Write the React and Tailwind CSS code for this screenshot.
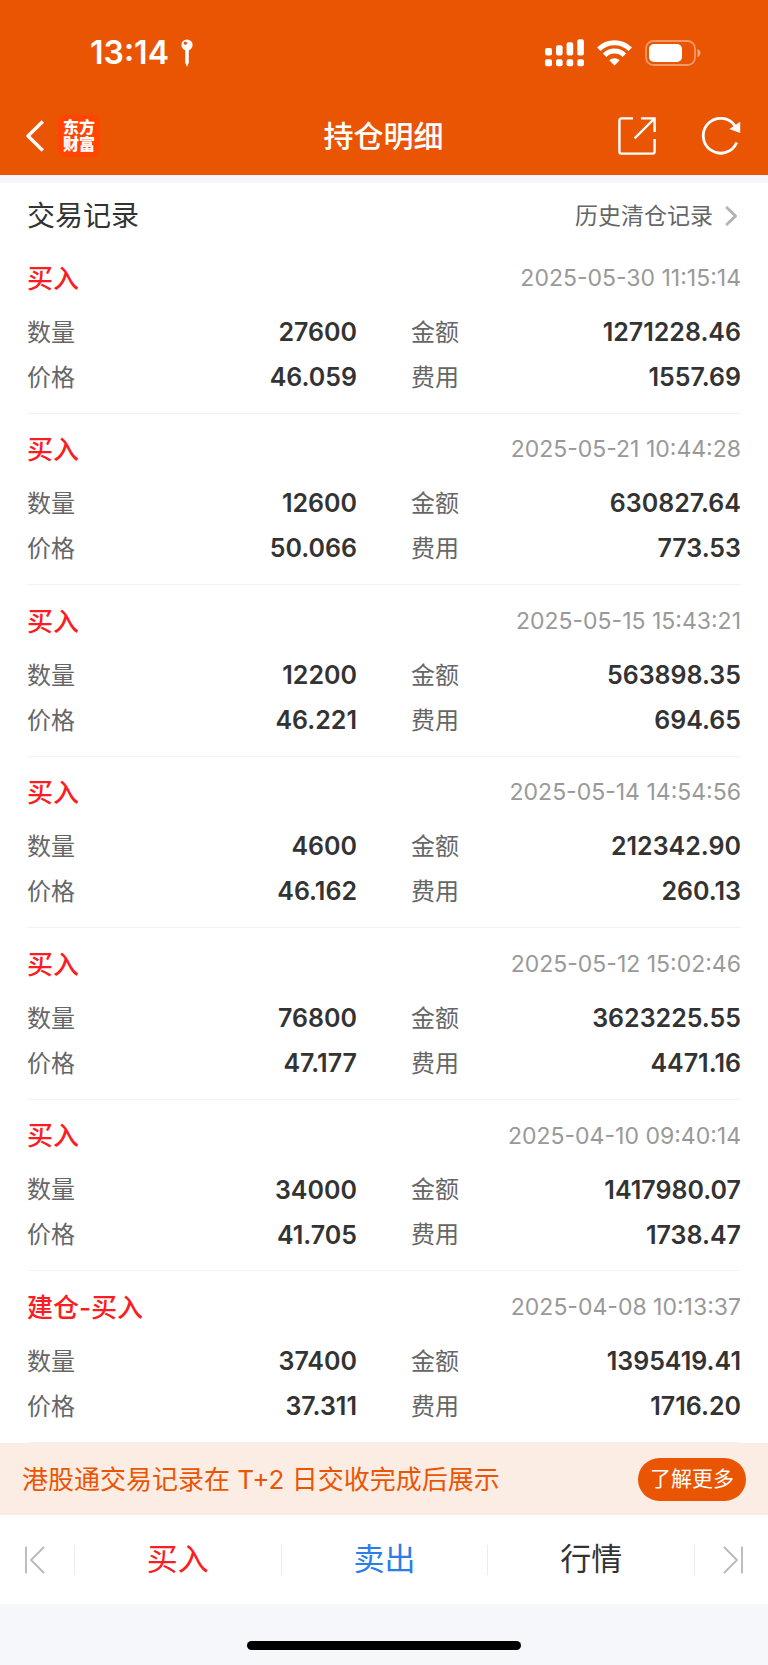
import { useState } from 'react'

const records = [
  { type: '买入', time: '2025-05-30 11:15:14', qty: '27600', amount: '1271228.46', price: '46.059', fee: '1557.69' },
  { type: '买入', time: '2025-05-21 10:44:28', qty: '12600', amount: '630827.64', price: '50.066', fee: '773.53' },
  { type: '买入', time: '2025-05-15 15:43:21', qty: '12200', amount: '563898.35', price: '46.221', fee: '694.65' },
  { type: '买入', time: '2025-05-14 14:54:56', qty: '4600', amount: '212342.90', price: '46.162', fee: '260.13' },
  { type: '买入', time: '2025-05-12 15:02:46', qty: '76800', amount: '3623225.55', price: '47.177', fee: '4471.16' },
  { type: '买入', time: '2025-04-10 09:40:14', qty: '34000', amount: '1417980.07', price: '41.705', fee: '1738.47' },
  { type: '建仓-买入', time: '2025-04-08 10:13:37', qty: '37400', amount: '1395419.41', price: '37.311', fee: '1716.20' },
]

function StatusBar() {
  return (
    <div className="flex h-[97px] items-center justify-between pt-2 pl-[90px] pr-[67px]">
      <div className="flex items-center gap-3">
        <span className="text-[32px] leading-9 font-semibold">13:14</span>
        <svg width="12" height="28" viewBox="0 0 12 28" aria-hidden="true">
          <path d="M4.2 9.5h3.6v14L6 28l-1.8-4.5z" fill="currentColor" />
          <circle cx="6" cy="6" r="5.6" fill="currentColor" />
          <circle cx="4.4" cy="4.2" r="1.6" fill="#ea5504" />
        </svg>
      </div>
      <div className="flex items-center gap-[13px]">
        {/* Dual SIM signal */}
        <svg width="39" height="28" viewBox="0 0 39 28" fill="currentColor" aria-hidden="true">
          <rect x="0" y="9" width="7" height="7.5" rx="2" />
          <rect x="11" y="6.3" width="6.6" height="10.2" rx="2" />
          <rect x="21.6" y="3.3" width="6.6" height="13.2" rx="2" />
          <rect x="32.3" y="0.3" width="6.6" height="16.2" rx="2" />
          <rect x="0" y="20.2" width="7" height="7" rx="2" />
          <rect x="11" y="20.2" width="6.6" height="7" rx="2" />
          <rect x="21.6" y="20.2" width="6.6" height="7" rx="2" />
          <rect x="32.3" y="20.2" width="6.6" height="7" rx="2" />
        </svg>
        <svg width="35" height="26" viewBox="0 0 35 26" aria-hidden="true">
          <g fill="none" stroke="currentColor" strokeWidth="5">
            <path d="M1.8 9.2a22.4 22.4 0 0 1 31.4 0" />
            <path d="M7.6 15.2a14 14 0 0 1 19.8 0" />
          </g>
          <path d="M17.5 25.5l-5.2-5.2a7.4 7.4 0 0 1 10.4 0z" fill="currentColor" />
        </svg>
        <svg width="56" height="26" viewBox="0 0 56 26" aria-hidden="true">
          <rect x="1" y="1" width="49" height="24" rx="7.5" fill="none" stroke="currentColor" strokeOpacity="0.4" strokeWidth="1.8" />
          <rect x="4" y="4" width="33" height="18" rx="5" fill="currentColor" />
          <path d="M52.5 9c4 1.6 4 6.6 0 8.2z" fill="currentColor" fillOpacity="0.5" />
        </svg>
      </div>
    </div>
  )
}

function NavBar() {
  return (
    <div className="grid h-[78px] grid-cols-3 items-center pl-[26px] pr-[27px]">
      <div className="flex items-center gap-[14px]">
        <button aria-label="返回">
          <svg width="18" height="32" viewBox="0 0 18 32" fill="none" stroke="currentColor" strokeWidth="3.4" strokeLinejoin="round" aria-hidden="true">
            <path d="M16.8 1.5L2 16l14.8 14.5" />
          </svg>
        </button>
        <div className="flex h-[42px] w-[42px] flex-col items-center justify-center rounded-lg bg-[#ff4403] text-base leading-[17px] font-black">
          <span>东方</span>
          <span>财富</span>
        </div>
      </div>
      <h1 className="text-center text-[30px] leading-10 font-medium">持仓明细</h1>
      <div className="flex items-center justify-end gap-[45px]">
        <button aria-label="分享">
          <svg width="38" height="38" viewBox="0 0 38 38" fill="none" stroke="currentColor" strokeWidth="2.4" aria-hidden="true">
            <path d="M15 1.4H3.4a2 2 0 0 0-2 2v31.2a2 2 0 0 0 2 2h31.2a2 2 0 0 0 2-2V22" />
            <path d="M23 1.4h13.6V15M36 2L16.6 21.4" />
          </svg>
        </button>
        <button aria-label="刷新">
          <svg width="40" height="38" viewBox="0 0 40 38" aria-hidden="true">
            <path d="M35.7 25.5A17.4 17.4 0 1 1 34.2 9.2" fill="none" stroke="currentColor" strokeWidth="2.8" />
            <path d="M39.2 4.7v11.2L28.4 12z" fill="currentColor" />
          </svg>
        </button>
      </div>
    </div>
  )
}

function Field({ label, value }) {
  return (
    <div className="flex h-[45px] items-center justify-between">
      <dt className="text-2xl text-[#666]">{label}</dt>
      <dd className="text-[25px] font-semibold text-[#333]">{value}</dd>
    </div>
  )
}

function Record({ record }) {
  return (
    <li className="flex-1 border-b border-[#f1f2f4] pt-[17px] pb-3">
      <div className="flex h-[38px] items-center justify-between">
        <h3 className="text-[26px] font-medium text-[#fb1d22]">{record.type}</h3>
        <time className="text-[23px] text-[#999]">{record.time}</time>
      </div>
      <dl className="mt-[13px] grid grid-cols-2 gap-x-[54px]">
        <Field label="数量" value={record.qty} />
        <Field label="金额" value={record.amount} />
        <Field label="价格" value={record.price} />
        <Field label="费用" value={record.fee} />
      </dl>
    </li>
  )
}

export default function App() {
  const [current, setCurrent] = useState('')

  return (
    <div className="flex min-h-screen flex-col bg-[#f6f7fa] font-['Inter','Noto_Sans_CJK_SC',sans-serif] text-[#333]">
      <header className="bg-[#ea5504] text-white">
        <StatusBar />
        <NavBar />
      </header>

      <main className="mt-2 flex flex-1 flex-col bg-white">
        <div className="flex h-[59px] items-center justify-between px-[27px] pt-1.5">
          <h2 className="text-[28px] leading-10">交易记录</h2>
          <a href="#history" className="flex items-center gap-3 text-[23px] leading-10 text-[#666]">
            历史清仓记录
            <svg className="mr-1" width="12" height="20" viewBox="0 0 12 20" fill="none" stroke="#b3b3b3" strokeWidth="2.8" aria-hidden="true">
              <path d="M1.2 1l9.2 9-9.2 9" />
            </svg>
          </a>
        </div>
        <ul className="flex flex-1 flex-col px-[27px]">
          {records.map((record) => (
            <Record key={record.time} record={record} />
          ))}
        </ul>
      </main>

      <footer>
        <div className="flex h-[72px] items-center justify-between bg-[#fcede4] px-[22px]">
          <p className="text-[26px] text-[#ea5504]">港股通交易记录在 T+2 日交收完成后展示</p>
          <button className="h-[43px] rounded-full bg-[#ea5504] px-3 text-[21px] text-white">了解更多</button>
        </div>

        {/* Trade actions */}
        <nav className="flex h-[89px] items-center bg-white text-[31px]">
          <button aria-label="上一个" className="flex h-[30px] w-[75px] items-center border-r border-[#ececec] pl-[25px]">
            <svg width="20" height="28" viewBox="0 0 20 28" fill="none" stroke="#b8b8b8" strokeWidth="1.8" aria-hidden="true">
              <path d="M1 0.5v27M19 1L6 14l13 13" />
            </svg>
          </button>
          <button onClick={() => setCurrent('buy')} className="flex h-[30px] flex-1 items-center justify-center border-r border-[#ececec] text-[#fb1d22]">
            买入
          </button>
          <button onClick={() => setCurrent('sell')} className="flex h-[30px] flex-1 items-center justify-center border-r border-[#ececec] text-[#2b7de9]">
            卖出
          </button>
          <button onClick={() => setCurrent('quote')} className="flex h-[30px] flex-1 items-center justify-center border-r border-[#ececec]">
            行情
          </button>
          <button aria-label="下一个" className="flex h-[30px] w-[73px] items-center justify-end pr-[25px]">
            <svg width="20" height="28" viewBox="0 0 20 28" fill="none" stroke="#b8b8b8" strokeWidth="1.8" aria-hidden="true">
              <path d="M19 0.5v27M1 1l13 13L1 27" />
            </svg>
          </button>
        </nav>

        {/* Home indicator */}
        <div className="flex h-[61px] items-end justify-center pb-[15px]">
          <div className="h-[9px] w-[274px] rounded-full bg-black" />
        </div>
      </footer>
    </div>
  )
}
